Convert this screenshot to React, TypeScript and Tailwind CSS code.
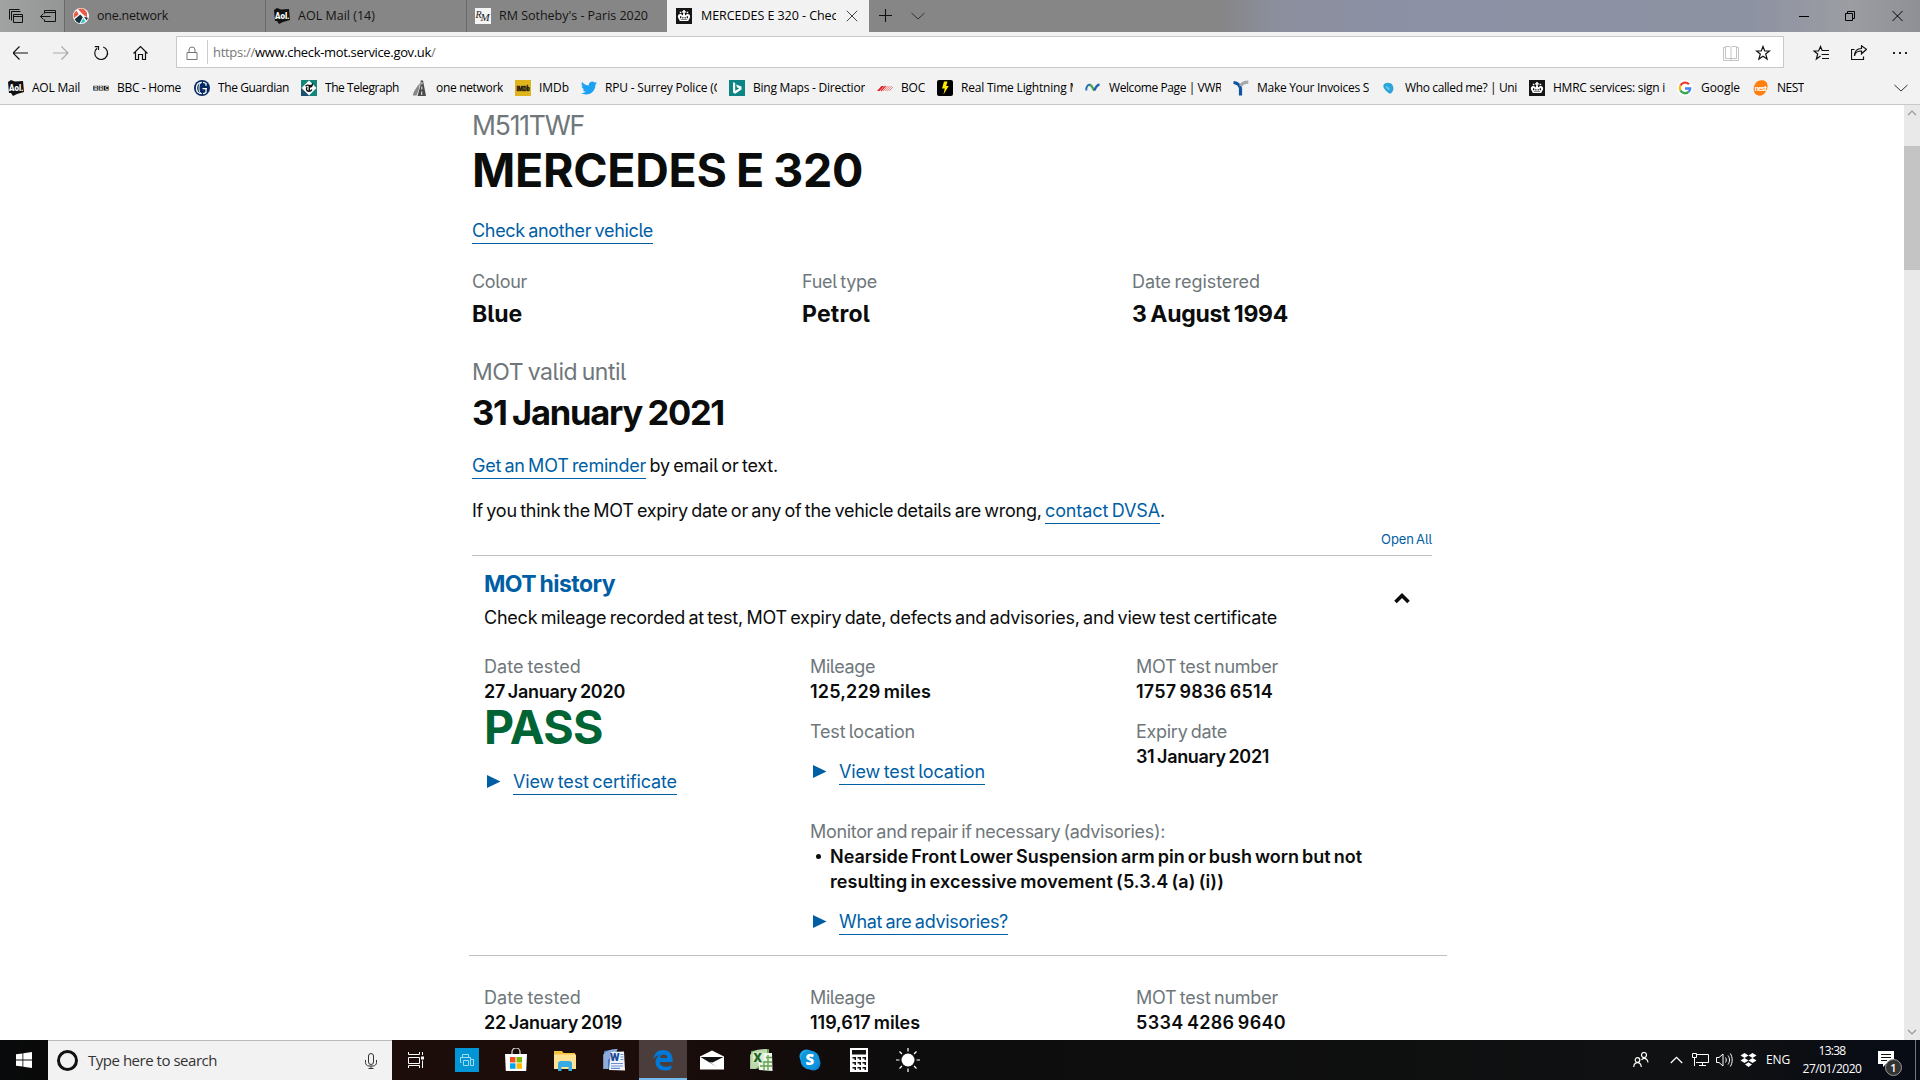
import { useLayoutEffect, useRef, type ReactNode } from "react";

/** Single line of text whose tracking is adjusted so that it fills a given width. */
function Fit({ w, className = "", children }: { w: number; className?: string; children: string }) {
  const ref = useRef<HTMLSpanElement>(null);
  useLayoutEffect(() => {
    const el = ref.current;
    if (!el) return;
    el.style.letterSpacing = "0px";
    const natural = el.getBoundingClientRect().width;
    el.style.letterSpacing = `${(w - natural) / children.length}px`;
  }, [w, children]);
  return (
    <span ref={ref} className={`inline-block shrink-0 justify-self-start whitespace-pre ${className}`}>
      {children}
    </span>
  );
}

function Svg({ w = 16, h = 16, children, className = "" }: { w?: number; h?: number; children: ReactNode; className?: string }) {
  return (
    <svg width={w} height={h} viewBox={`0 0 ${w} ${h}`} fill="none" className={`shrink-0 ${className}`}>
      {children}
    </svg>
  );
}

/* ---------- favicons ---------- */

const Aol = () => (
  <Svg>
    <path d="M0 2 3 0l4 1.500 8-.5 1 11-7 2-4 2-2-3H1z" fill="#111" />
    <text x="1" y="11" fontSize="8.500" fontWeight="900" fill="#fff" fontFamily="Roboto, sans-serif" textLength="14.500" lengthAdjust="spacingAndGlyphs">Aol.</text>
  </Svg>
);

const OneNetwork = () => (
  <Svg>
    <circle cx="8" cy="8" r="8" fill="#fff" />
    <path d="M3.400 2.400A7.300 7.300 0 0 0 1 10L5.800 6.200z" fill="#ee5a48" />
    <path d="M5 1.300a7.400 7.400 0 0 1 6.500.200L14 4.500v5L9.500 6z" fill="#ee5a48" />
    <path d="M7.300 6.500 1.600 11.200A7.300 7.300 0 0 0 6.500 15.200L9.800 9.300z" fill="#17333d" />
    <path d="m10.300 10.200-2.800 5.100a7.300 7.300 0 0 0 5-1.800z" fill="#35c0cc" />
    <path d="m11 8.700 2.700 3.700 1.300-2.600z" fill="#17333d" />
  </Svg>
);

const RM = () => (
  <Svg>
    <rect width="16" height="16" fill="#f4f4f4" />
    <text x="0.500" y="9.500" fontSize="10" fontStyle="italic" fill="#222" fontFamily="Liberation Serif, serif">R</text>
    <text x="5.500" y="13" fontSize="11" fontStyle="italic" fill="#222" fontFamily="Liberation Serif, serif">M</text>
  </Svg>
);

const Crown = () => (
  <Svg>
    <rect width="16" height="16" fill="#151515" />
    <path d="M3.800 13 2 9.500C1.300 7 3.300 5.500 5.300 6.300L7 7.500V6h2v1.500l1.700-1.200c2-.8 4 .7 3.300 3.200L12.200 13z" fill="#fff" />
    <path d="M7.200 2h1.600v1.200H10v1.300H8.800V6H7.200V4.500H6V3.200h1.200zM3.800 3.800h1.600v1.500H3.800zM10.600 3.800h1.600v1.500h-1.600z" fill="#fff" />
    <path d="M4 8.300h1.300v2H4zM6.300 9h1.100v1.500H6.300zM8.600 9h1.100v1.500H8.600zM10.700 8.300H12v2h-1.300zM4.800 11.600h6.400v.5H4.800z" fill="#151515" />
  </Svg>
);

const Bbc = () => (
  <Svg>
    {["B", "B", "C"].map((c, i) => (
      <g key={i}>
        <rect x={0.3 + i * 5.3} y="5.800" width="4.700" height="4.700" fill="#111" />
        <text x={1.3 + i * 5.3} y="9.800" fontSize="4.500" fontWeight="700" fill="#fff" fontFamily="Liberation Sans, sans-serif">{c}</text>
      </g>
    ))}
  </Svg>
);

const Guardian = () => (
  <Svg>
    <circle cx="8" cy="8" r="8" fill="#052962" />
    <path d="M7.600 2.300C4.300 2.500 2.500 5 2.500 8s1.800 5.500 5.100 5.700M9 2.300c1.200.1 2 .5 3 1.200v2.300M9 13.700c1.200-.1 2-.5 3-1.200V8.800M8.500 8.600H13" stroke="#fff" strokeWidth="1.300" />
    <path d="M7.600 2.300c-2 .7-2.600 3-2.600 5.700s.6 5 2.600 5.700" stroke="#fff" strokeWidth="1" />
  </Svg>
);

const Telegraph = () => (
  <Svg>
    <path d="M0 0h16v16H0z" fill="#14857a" />
    <path d="M0 0h8v8H0zM0 8h8v8H0z" fill="#1b4f70" />
    <path d="M0 0h8v4L4 8H0z" fill="#14857a" />
    <path d="M8 .5 15.500 8 8 15.500.5 8z" fill="#fff" />
    <path d="M4.500 6.300c1-2 3-1 4-.8 1 .2 2 .2 2.800-.8-.2 2-1.500 2.500-3 2.200v4M6.200 7c-1.300 1.500-.8 4.200 1.600 4.400 1.500.1 2.500-.7 3-1.900" stroke="#111" strokeWidth="1.400" />
  </Svg>
);

const Road = () => (
  <Svg>
    <path d="M8.700.5h2.300L14 16H5.500L8.300 6z" fill="#4b4b4b" />
    <path d="M8 3C5 7 2 10 .8 15.500h3.700L7 9z" fill="#888" />
    <path d="M9.900 2v2.500M9.800 6.500v3M9.700 11.500V15" stroke="#fff" strokeWidth=".9" />
  </Svg>
);

const Imdb = () => (
  <Svg>
    <rect width="16" height="16" fill="#e0b41c" />
    <text x="1.400" y="10.600" fontSize="7" fontWeight="900" fill="#111" stroke="#111" strokeWidth=".3" fontFamily="Roboto, sans-serif" textLength="13.200" lengthAdjust="spacingAndGlyphs">IMDb</text>
  </Svg>
);

const Twitter = () => (
  <svg width="16" height="16" viewBox="0 0 24 24" className="shrink-0">
    <path fill="#1da1f2" d="M23.950 4.570a10 10 0 0 1-2.820.770 4.960 4.960 0 0 0 2.160-2.720 9.900 9.900 0 0 1-3.120 1.190 4.920 4.920 0 0 0-8.380 4.480A13.930 13.930 0 0 1 1.640 3.160a4.920 4.920 0 0 0 1.520 6.570 4.900 4.900 0 0 1-2.230-.61v.06a4.920 4.920 0 0 0 3.950 4.830 5 5 0 0 1-2.210.08 4.940 4.940 0 0 0 4.600 3.420A9.870 9.870 0 0 1 0 19.540a13.990 13.990 0 0 0 7.550 2.210c9.050 0 14-7.500 14-13.980 0-.21 0-.42-.02-.63a9.940 9.940 0 0 0 2.460-2.550z" />
  </svg>
);

const Bing = () => (
  <Svg>
    <rect width="16" height="16" fill="#0c8484" />
    <path d="m4 2.200 2.200.8v7.700l4-2.200-2-.9-1.200-3 5.500 2v2.900L6.200 13.800 4 12.500z" fill="#fff" />
  </Svg>
);

const Boc = () => (
  <Svg>
    <path d="M0 11 4.500 6H7l-4.500 5z" fill="#e01b1b" />
    <path d="m4 11 4.500-5" stroke="#e33" strokeWidth="1.500" />
    <path d="M6.200 11 10.700 6M8.200 11l4.500-5M10.200 11l4.500-5M12.200 11 16 7" stroke="#ee6a6a" strokeWidth=".8" />
  </Svg>
);

const Lightning = () => (
  <Svg>
    <rect width="16" height="16" rx="2" fill="#000" />
    <path d="M7 1.500h3.500L9.200 6h2.500L6.500 14.500l1.200-6H5z" fill="#ffe600" />
  </Svg>
);

const Vwr = () => (
  <Svg>
    <path d="M6 5C3 4 1 6.500 1.300 10.500" stroke="#2a6fb8" strokeWidth="1.900" />
    <path d="M5 5c2.500.5 2.500 3.500 4.200 5.500" stroke="#45a64a" strokeWidth="2.300" />
    <path d="M14.500 4.500c-2.500.5-4 3-5.200 6" stroke="#2a5fae" strokeWidth="2.300" />
  </Svg>
);

const Invoices = () => (
  <Svg>
    <path d="M.5 2.500c3 .2 5.700 2 7 5.500v7.500" stroke="#1155a0" strokeWidth="3.200" />
    <path d="M7.500 6c1-2 3-3.700 7.800-3.800" stroke="#a5a9ae" strokeWidth="3.200" />
  </Svg>
);

const WhoCalled = () => (
  <Svg>
    <path d="M2.500 5c1-2.200 4.500-3 7-1.800S13 8 12 10.500s-2.500 4-4.500 2.500S1.500 8 2.500 5z" fill="#2aa5dc" />
    <path d="M4.500 6c2 0 4 2 4.500 4-1.500.5-4-1.500-4.500-4z" fill="#70c8ec" />
  </Svg>
);

const Google = () => (
  <svg width="16" height="16" viewBox="0 0 16 16" className="shrink-0">
    <circle cx="8" cy="8" r="8" fill="#fff" />
    <g fill="none" strokeWidth="2.300">
      <path d="M12 4.300A5.200 5.200 0 0 0 3.400 5.600" stroke="#ea4335" />
      <path d="M3.400 5.600a5.200 5.200 0 0 0 0 4.800" stroke="#fbbc05" />
      <path d="M3.400 10.400a5.200 5.200 0 0 0 8.200 1.400" stroke="#34a853" />
      <path d="M11.600 11.800A5.200 5.200 0 0 0 13.200 8.500H8" stroke="#4285f4" />
    </g>
  </svg>
);

const Nest = () => (
  <Svg>
    <path d="M8 .3c4-.8 7 2 6.500 6.500S11 15.800 6.500 15.700-.3 11 1 6.500 5 .8 8 .3z" fill="#ff7f0f" />
    <text x="1.800" y="10.700" fontSize="7.500" fontWeight="700" fill="#fff" fontFamily="Roboto, sans-serif" textLength="12">nest</text>
  </Svg>
);

/* ---------- browser frame ---------- */

function Tab({ icon, label, w }: { icon: ReactNode; label: string; w: number }) {
  return (
    <div className="flex h-8 w-[201px] shrink-0 items-center border-l border-[#6a6a6a] bg-[#868686] pl-2">
      {icon}
      <Fit w={w} className="ml-[8px] text-[12.500px] text-[#151515]">{label}</Fit>
    </div>
  );
}

function TitleBar() {
  return (
    <div className="flex h-8 items-center bg-[linear-gradient(90deg,#a0a3a2_0px,#949595_64px,#868686_300px,#868686_1220px,#8b8f9d_1275px,#8b90a5_1400px,#8d92a2_1750px,#9c9da3_1850px,#8e9096_1920px)]">
      <div className="flex w-[64px] shrink-0 items-center gap-4 pl-2">
        <Svg className="text-black">
          <path d="M1.500 11.500v-10h10M3.500 12.500v-9h9M5.500 6.500h9v8h-9zM5.500 8.500h9" stroke="#111" />
        </Svg>
        <Svg>
          <path d="M4.500 5.500v-3h11v11h-11v-2M4.500 4.500h11M10.500 8.500H.5M3.500 5.500l-3 3 3 3" stroke="#111" />
        </Svg>
      </div>
      <Tab icon={<OneNetwork />} label="one.network" w={71} />
      <Tab icon={<Aol />} label="AOL Mail (14)" w={77} />
      <Tab icon={<RM />} label="RM Sotheby's - Paris 2020" w={149} />
      <div className="flex h-8 w-[202px] shrink-0 items-center bg-[#f2f2f2] pl-[9px]">
        <Crown />
        <div className="ml-[9px] flex w-[135px] overflow-hidden">
          <Fit w={143} className="text-[12.500px] text-black">MERCEDES E 320 - Check</Fit>
        </div>
        <Svg w={12} h={12} className="ml-[10px]">
          <path d="m.8.8 10.400 10.400M11.200.8.8 11.200" stroke="#444" />
        </Svg>
      </div>
      <Svg w={14} h={14} className="ml-[10px]">
        <path d="M6.500 0v13M0 6.500h13" stroke="#111" strokeWidth="1.100" />
      </Svg>
      <Svg w={14} h={14} className="ml-[18px]">
        <path d="m.5 4 6.500 6 6.500-6" stroke="#333" />
      </Svg>
      <div className="mr-[17px] ml-auto flex items-center gap-9">
        <Svg w={10} h={12}><path d="M0 6.500h10" stroke="#000" /></Svg>
        <Svg w={11} h={12}>
          <path d="M.5 3.500h7v7h-7zM2.500 3.500v-2h7v7h-2" stroke="#000" />
        </Svg>
        <Svg w={11} h={12}>
          <path d="m.5 1 10 10M10.500 1l-10 10" stroke="#000" />
        </Svg>
      </div>
    </div>
  );
}

const starPath = "M8 1.500 9.700 6h4.800l-3.800 3 1.400 5L8 11.200 3.900 14l1.400-5-3.800-3h4.800z";

function AddressBar() {
  return (
    <div className="flex h-10 items-center bg-[#f2f2f2] pt-1 pb-1">
      <div className="flex w-[176px] shrink-0 items-center gap-6 pt-px pl-[13px]">
        <Svg><path d="M0 8h15M6.500 1.500 0 8l6.500 6.500" stroke="#111" strokeWidth="1.200" /></Svg>
        <Svg><path d="M0 8h15M8.500 1.500 15 8l-6.500 6.500" stroke="#aaa" strokeWidth="1.200" /></Svg>
        <Svg><path d="M10.200 2A6.400 6.400 0 1 1 4 3.200M1.800 1.600h3.700v3.500" stroke="#111" strokeWidth="1.200" /></Svg>
        <Svg><path d="M.500 8.500 7.500 1.600l7 6.900M2.500 7v7.500h3V9.500h4v5h3V7" stroke="#111" strokeWidth="1.200" /></Svg>
      </div>
      <div className="flex h-8 w-[1608px] shrink-0 items-center border border-[#c8c8c8] bg-white">
        <Svg w={12} h={14} className="mt-px ml-[9px]">
          <path d="M1 6.500h10v7H1zM3 6.500V4a3 3 0 0 1 6 0v2.500" stroke="#777" />
        </Svg>
        <div className="ml-[9px] h-6 w-px bg-[#ccc]" />
        <div className="mt-0.5 ml-[5px] flex text-[13px]">
          <Fit w={42} className="text-[#777]">https://</Fit>
          <Fit w={176} className="text-black">www.check-mot.service.gov.uk</Fit>
          <span className="text-[#777]">/</span>
        </div>
        <Svg className="mt-px ml-auto">
          <path d="M.5 2.500h2v11h11v-11h2v13H.5zM2.500 1.500H7l1 1 1-1h4.500v12H9l-1 1-1-1H2.500zM8 2.500v12" stroke="#c4c4c4" />
        </Svg>
        <Svg className="mt-px mr-[12px] ml-4"><path d={starPath} stroke="#111" strokeWidth="1.200" /></Svg>
      </div>
      <div className="ml-[29px] flex items-center gap-[22px] pt-px">
        <Svg>
          <path d="M11 5.500H9.200L7.500 1.500 5.600 6H1l3.700 3L3.400 14 7.500 11M9 5.500h7M8.500 9.500H16M9 13.500h7" stroke="#111" strokeWidth="1.200" />
        </Svg>
        <Svg>
          <path d="M3.500 4.500h-3v10h12v-3M3.500 11C4 7.500 6.500 6 10.500 6v2.800l5-4.500-5-3.500v2.700C6 3.600 3.600 6.500 3.500 11z" stroke="#111" strokeWidth="1.200" />
        </Svg>
        <Svg className="ml-1">
          <path d="M0 7h2v2H0zM6 7h2v2H6zM12 7h2v2h-2z" fill="#222" />
        </Svg>
      </div>
    </div>
  );
}

const bookmarks: { icon: ReactNode; label: string; w: number; clip?: number; gap: number }[] = [
  { icon: <Aol />, label: "AOL Mail", w: 48, gap: 13 },
  { icon: <Bbc />, label: "BBC - Home", w: 64, gap: 13 },
  { icon: <Guardian />, label: "The Guardian", w: 71, gap: 12 },
  { icon: <Telegraph />, label: "The Telegraph", w: 74, gap: 13 },
  { icon: <Road />, label: "one network", w: 67, gap: 12 },
  { icon: <Imdb />, label: "IMDb", w: 30, gap: 12 },
  { icon: <Twitter />, label: "RPU - Surrey Police (G", w: 117, clip: 112, gap: 12 },
  { icon: <Bing />, label: "Bing Maps - Directions", w: 120, clip: 112, gap: 12 },
  { icon: <Boc />, label: "BOC", w: 24, gap: 12 },
  { icon: <Lightning />, label: "Real Time Lightning M", w: 119, clip: 112, gap: 12 },
  { icon: <Vwr />, label: "Welcome Page | VWR", w: 113, clip: 112, gap: 12 },
  { icon: <Invoices />, label: "Make Your Invoices S", w: 112, clip: 112, gap: 12 },
  { icon: <WhoCalled />, label: "Who called me? | Uni", w: 112, clip: 112, gap: 12 },
  { icon: <Crown />, label: "HMRC services: sign i", w: 112, clip: 112, gap: 12 },
  { icon: <Google />, label: "Google", w: 39, gap: 13 },
  { icon: <Nest />, label: "NEST", w: 27, gap: 0 },
];

function BookmarksBar() {
  return (
    <div className="flex h-[33px] items-center border-b border-[#c8c8c8] bg-[#f2f2f2] pl-2">
      {bookmarks.map((b) => (
        <div key={b.label} className="flex shrink-0 items-center" style={{ marginRight: b.gap }}>
          {b.icon}
          <div className="mb-px ml-2 flex overflow-hidden" style={{ width: b.clip ?? b.w }}>
            <Fit w={b.w} className="text-[12px] text-black">{b.label}</Fit>
          </div>
        </div>
      ))}
      <Svg w={14} h={14} className="mr-[12px] ml-auto">
        <path d="m.5 4 6.500 6 6.500-6" stroke="#333" />
      </Svg>
    </div>
  );
}

/* ---------- page ---------- */

const Label = ({ w, children }: { w: number; children: string }) => (
  <div className="h-[25px]"><Fit w={w} className="text-[#6f777b]">{children}</Fit></div>
);

const Value = ({ w, children }: { w: number; children: string }) => (
  <div className="h-[25px]"><Fit w={w} className="font-semibold">{children}</Fit></div>
);

const Link = ({ w, children }: { w: number; children: string }) => (
  <a className="block h-[26px] shrink-0 border-b border-[#005ea5] text-[#005ea5]" style={{ width: w }}>
    <Fit w={w}>{children}</Fit>
  </a>
);

const Disclosure = ({ w, children }: { w: number; children: string }) => (
  <div className="flex pl-[3px]">
    <Svg w={14} h={14} className="mt-[6px] mr-[12px]"><path d="M0 0v13l13.500-6.500z" fill="#005ea5" /></Svg>
    <Link w={w}>{children}</Link>
  </div>
);

function Page() {
  return (
    <main className="h-full flex-1 overflow-hidden bg-white pt-[5px] pl-[472px] font-['Inter',sans-serif] text-[18px] leading-[25px] [word-spacing:-0.08em] text-[#0b0c0c] [font-feature-settings:'cv05']">
      <div className="w-[960px]">
        <div className="h-[30px] text-[26.500px] leading-[30px]"><Fit w={112} className="text-[#6f777b]">M511TWF</Fit></div>
        <h1 className="mt-[5px] h-[50px] text-[46.500px] leading-[50px] font-bold"><Fit w={391}>MERCEDES E 320</Fit></h1>
        <div className="mt-[23px]"><Link w={181}>Check another vehicle</Link></div>

        <div className="mt-[25px] grid grid-cols-[330px_330px_300px]">
          <Label w={55}>Colour</Label>
          <Label w={75}>Fuel type</Label>
          <Label w={128}>Date registered</Label>
        </div>
        <div className="mt-[5px] mb-[-1px] grid h-[30px] grid-cols-[330px_330px_300px] text-[23px] leading-[30px] font-bold">
          <Fit w={50}>Blue</Fit>
          <Fit w={68}>Petrol</Fit>
          <Fit w={156}>3 August 1994</Fit>
        </div>

        <div className="mt-[29px] h-[30px] text-[23px] leading-[30px]"><Fit w={154} className="text-[#6f777b]">MOT valid until</Fit></div>
        <div className="mt-[6px] mb-[-1px] h-10 text-[34.500px] leading-[40px] font-bold"><Fit w={252}>31 January 2021</Fit></div>

        <p className="mt-[21px] flex h-[26px]">
          <Link w={174}>Get an MOT reminder</Link>
          <Fit w={132}> by email or text.</Fit>
        </p>
        <p className="mt-[19px] flex h-[26px]">
          <Fit w={573}>If you think the MOT expiry date or any of the vehicle details are wrong, </Fit>
          <Link w={115}>contact DVSA</Link>
          <span>.</span>
        </p>

        <div className="mt-[5px] flex h-5 justify-end text-[13px] leading-5 text-[#005ea5]"><Fit w={51}>Open All</Fit></div>
        <hr className="mt-[6px] border-[#bfc1c3]" />

        <section className="pt-[13px] pl-3">
          <div className="flex justify-between">
            <div>
              <h2 className="h-[30px] text-[23px] leading-[30px] font-bold text-[#005ea5]"><Fit w={131}>MOT history</Fit></h2>
              <div className="mt-[6px] h-[25px]">
                <Fit w={793}>Check mileage recorded at test, MOT expiry date, defects and advisories, and view test certificate</Fit>
              </div>
            </div>
            <Svg w={16} h={12} className="mt-[23px] mr-[22px]">
              <path d="m1.500 10 6.500-6.500 6.500 6.500" stroke="#0b0c0c" strokeWidth="3.600" />
            </Svg>
          </div>

          <div className="mt-6 grid grid-cols-[326px_326px_300px]">
            <div>
              <Label w={97}>Date tested</Label>
              <Value w={141}>27 January 2020</Value>
              <div className="-mt-0.5 h-[50px] text-[46.500px] leading-[50px] font-bold text-[#006435]"><Fit w={119}>PASS</Fit></div>
              <div className="mt-[17px]"><Disclosure w={164}>View test certificate</Disclosure></div>
            </div>
            <div>
              <Label w={65}>Mileage</Label>
              <Value w={121}>125,229 miles</Value>
              <div className="mt-[15px]"><Label w={105}>Test location</Label></div>
              <div className="mt-[15px]"><Disclosure w={146}>View test location</Disclosure></div>
              <div className="mt-[34px]"><Label w={355}>Monitor and repair if necessary (advisories):</Label></div>
              <div className="flex">
                <div className="mt-[10px] mr-[9px] ml-[6px] size-[5px] shrink-0 rounded-full bg-[#0b0c0c]" />
                <div>
                  <Value w={532}>Nearside Front Lower Suspension arm pin or bush worn but not</Value>
                  <Value w={394}>resulting in excessive movement (5.3.4 (a) (i))</Value>
                </div>
              </div>
              <div className="mt-[15px]"><Disclosure w={169}>What are advisories?</Disclosure></div>
            </div>
            <div>
              <Label w={142}>MOT test number</Label>
              <Value w={137}>1757 9836 6514</Value>
              <div className="mt-[15px]"><Label w={91}>Expiry date</Label></div>
              <Value w={133}>31 January 2021</Value>
            </div>
          </div>

          <hr className="mt-5 -ml-[15px] w-[978px] border-[#bfc1c3]" />

          <div className="mt-[29px] grid grid-cols-[326px_326px_300px]">
            <Label w={97}>Date tested</Label>
            <Label w={65}>Mileage</Label>
            <Label w={142}>MOT test number</Label>
            <Value w={138}>22 January 2019</Value>
            <Value w={110}>119,617 miles</Value>
            <Value w={150}>5334 4286 9640</Value>
          </div>
        </section>
      </div>
    </main>
  );
}

function Scrollbar() {
  return (
    <div className="flex h-full w-4 shrink-0 flex-col items-center bg-[#e9e9e9]">
      <Svg w={10} h={16}><path d="m1 10 4-4 4 4" stroke="#999" strokeWidth="1.200" /></Svg>
      <div className="mt-[25px] h-[124px] w-4 bg-[#c4c4c4]" />
      <Svg w={10} h={16} className="mt-auto"><path d="m1 6 4 4 4-4" stroke="#999" strokeWidth="1.200" /></Svg>
    </div>
  );
}

/* ---------- taskbar ---------- */

const apps: { name: string; active?: boolean; icon: ReactNode }[] = [
  {
    name: "printer",
    icon: (
      <Svg w={24} h={24}>
        <rect width="24" height="24" fill="#0096d6" />
        <path d="M7.500 9V6.500h6V9M6.500 14.500h-1v-5h10v2M8.500 12.500h5v5h-5zM15.500 11.500h3v6h-3z" stroke="#a5dcf4" />
      </Svg>
    ),
  },
  {
    name: "store",
    icon: (
      <Svg w={24} h={24}>
        <path d="M8 7V4a4 4 0 0 1 8 0v3" stroke="#ddd" strokeWidth="1.200" />
        <path d="M1 6h22l-.8 17H1.800z" fill="#fff" />
        <path d="M6 9h5.500v5.500H6z" fill="#f25022" /><path d="M12.500 9H18v5.500h-5.500z" fill="#7fba00" />
        <path d="M6 15.300h5.500v5.500H6z" fill="#00a4ef" /><path d="M12.500 15.300H18v5.500h-5.500z" fill="#ffb900" />
      </Svg>
    ),
  },
  {
    name: "explorer",
    icon: (
      <Svg w={24} h={24}>
        <path d="M1 3h8l1.500 2H22v15H1z" fill="#f3c13a" /><path d="M1 6.500h22v14.500H1z" fill="#ffe394" />
        <path d="M5 23v-8.500L7 13h10l2 1.500V23h-3.500v-4h-7v4z" fill="#39abe3" />
      </Svg>
    ),
  },
  {
    name: "word",
    icon: (
      <Svg w={24} h={24}>
        <path d="M2 3 15 1v21L2 20.500z" fill="#4977bd" /><path d="M1 7c3-5 9-6 15-6L6 12v9H1z" fill="#a9c4ea" opacity=".7" />
        <path d="m9 4 13-.5 1 19L7 22z" fill="#f1f5fb" />
        <text x="8" y="13" fontSize="11" fontWeight="900" fill="#1d4b9a" fontFamily="Roboto, sans-serif">W</text>
        <path d="M18.500 6.500h3M18.500 9h3M18.500 11.500h3M9 15.500h12M9 18h12M9 20.300h9" stroke="#6a8fce" strokeWidth="1.200" />
      </Svg>
    ),
  },
  {
    name: "edge",
    active: true,
    icon: (
      <svg width="22" height="22" viewBox="0 0 24 24" className="mt-px">
        <path fill="#0078d7" d="M1.500 10.800C2.300 4.600 6.500 1 12.300 1 18.700 1 22.500 5.500 22.500 11.500v2.800H8.500c.1 3.500 2.800 5 6.300 5 2.500 0 4.600-.7 6.300-1.700v4.200c-2 1.100-4.500 1.700-7.200 1.700-6 0-10-3.500-10-9 0-3.700 2-6.700 5.300-8.200C6.100 7 3.300 8.300 1.500 10.800zm7.200-.9h8c0-2.500-1.300-4-3.800-4-2.300 0-3.900 1.500-4.200 4z" />
      </svg>
    ),
  },
  {
    name: "mail",
    icon: (
      <Svg w={24} h={24}>
        <path d="M0 8.500 12 2.500l12 6V21.500H0z" fill="#fff" /><path d="M.500 9h23L12.500 14.500l-3-.5L17 19z" fill="#111" />
      </Svg>
    ),
  },
  {
    name: "excel",
    icon: (
      <Svg w={24} h={24}>
        <path d="M2 3 20 1v20L2 20.500z" fill="#6ea855" /><path d="M1 7c3-5 9-6 17-6v7L7 21H1z" fill="#cfe6c2" opacity=".8" />
        <path d="M9 5h14l.5 18L10 22z" fill="#eef6ea" />
        <path d="M11 14h12M11 18h12M15 13v9M19 7v15M17 9.500h6" stroke="#61a04d" strokeWidth="1.300" />
        <path d="M4 4.500h10.500v10H4z" fill="#d8ebd0" />
        <text x="4.500" y="14" fontSize="13" fontWeight="900" fill="#23651f" fontFamily="Roboto, sans-serif">X</text>
      </Svg>
    ),
  },
  {
    name: "skype",
    icon: (
      <Svg w={24} h={24}>
        <circle cx="8.500" cy="8.500" r="7" fill="#1ba7e5" /><circle cx="15.500" cy="15.500" r="7" fill="#0a84d8" /><circle cx="12" cy="12" r="9.600" fill="#0f95dc" />
        <text x="7.500" y="17.300" fontSize="15" fontWeight="800" fill="#fff" fontFamily="Open Sans, sans-serif">S</text>
      </Svg>
    ),
  },
  {
    name: "calculator",
    icon: (
      <Svg w={18} h={24}>
        <path d="M0 0h18v24H0z" fill="#fff" />
        <path d="M2 2h14v4.500H2z" fill="#111" />
        {[9, 14, 19].map((y) => [2.5, 7.5, 12.5].map((x) => <path key={`${x}-${y}`} d={`M${x} ${y}h3.500v3h-1.500v-1.500h-2z`} fill="#111" />))}
      </Svg>
    ),
  },
  {
    name: "weather",
    icon: (
      <Svg w={24} h={24}>
        <circle cx="12" cy="12" r="6.500" fill="#fff" />
        <path d="M12 0v3.500M12 20.500V24M0 12h3.500M20.500 12H24M3.500 3.500 6 6M18 18l2.500 2.500M3.500 20.500 6 18M18 6l2.500-2.500" stroke="#fff" strokeWidth="1.200" />
      </Svg>
    ),
  },
];

function Taskbar() {
  return (
    <div className="flex h-10 items-center bg-[linear-gradient(90deg,#080a0b_0px,#0a0909_48px,#1c0d0b_400px,#1c0d0a_640px,#140c0b_760px,#0d0d0d_900px,#101112_1700px,#070b15_1920px)] text-white">
      <div className="flex w-12 shrink-0 justify-center">
        <Svg>
          <path d="M0 2.300 6.500 1.400v6.200H0zM7.300 1.300 16 0v7.600H7.300zM0 8.400h6.500v6.200L0 13.700zM7.300 8.400H16V16l-8.700-1.300z" fill="#fff" />
        </Svg>
      </div>
      <div className="flex h-10 w-[344px] shrink-0 items-center border-t border-[#b9b9b9] bg-[#f2f2f2] pl-[9px]">
        <div className="size-[21px] rounded-full border-[3px] border-[#111]" />
        <Fit w={129} className="ml-[10px] text-[15px] text-[#333]">Type here to search</Fit>
        <Svg w={12} h={16} className="mr-[15px] ml-auto">
          <path d="M3.500 3a2.500 2.500 0 0 1 5 0v6a2.500 2.500 0 0 1-5 0zM.5 7v2.500c0 2 1.500 3.500 3.500 3.500h4c2 0 3.500-1.500 3.500-3.500V7M6 13v2.500M3.500 15.500h5" stroke="#333" />
        </Svg>
      </div>
      <div className="flex w-[51px] shrink-0 pl-4">
        <Svg w={17} h={16}>
          <path d="M.5 0v2.500h11V0M.5 5.500h11v6H.5zM.5 16v-2.500h11V16M14.500 0v3M14.500 8.500V16" stroke="#fff" /><path d="M13 4.500h3v3h-3z" fill="#fff" />
        </Svg>
      </div>
      <div className="flex gap-px">
        {apps.map((a) => (
          <div key={a.name} className={`flex h-10 w-12 items-center justify-center ${a.active ? "border-b-2 border-[#76b9ed] bg-[#4a3d3b]" : ""}`}>
            {a.icon}
          </div>
        ))}
      </div>
      <div className="ml-auto flex h-10 items-center">
        <Svg w={16} h={16}>
          <circle cx="11" cy="3" r="2.500" stroke="#fff" strokeWidth="1.200" /><circle cx="4.500" cy="8" r="2.300" stroke="#fff" strokeWidth="1.200" />
          <path d="M.700 15c.3-3 2-4.300 3.800-4.300S8 12 8.300 15M8.500 8c.700-1.200 1.500-1.700 2.500-1.700 2.200 0 3.700 1.600 4 4.200" stroke="#fff" strokeWidth="1.200" />
        </Svg>
        <Svg w={13} h={12} className="ml-[21px]"><path d="m.8 9 5.700-5.700L12.200 9" stroke="#fff" strokeWidth="1.300" /></Svg>
        <Svg w={17} h={16} className="ml-[9px]">
          <path d="M4.500 2.500h12v8H4M10.500 10.500v3M7 13.500h7M.5 1.500h4v4h-4zM2.500 5.500v8.500" stroke="#fff" />
        </Svg>
        <Svg w={17} h={16} className="ml-[7px]">
          <path d="M.5 5.500h2.500l4-3.500v12l-4-3.500H.5zM9.500 5.500c1 1.500 1 3.500 0 5M12 3.500c2 2.700 2 6.300 0 9M14.300 1.500c2.500 4 2.500 9 0 13" stroke="#fff" />
        </Svg>
        <Svg w={17} h={16} className="ml-[7px]">
          <path d="m4.500 1 4 2.500-4 2.500L.5 3.500zM12.500 1l4 2.500-4 2.500-4-2.500zM4.500 6l4 2.500-4 2.500-4-2.500zM12.500 6l4 2.500-4 2.500-4-2.500zM8.500 10.200l3.500 2.300L8.500 15 5 12.500z" fill="#fff" />
        </Svg>
        <Fit w={24} className="ml-[9px] text-[12px]">ENG</Fit>
        <div className="ml-[12px] flex w-[60px] flex-col items-center text-[12px] leading-[18px]">
          <Fit w={27}>13:38</Fit>
          <Fit w={59}>27/01/2020</Fit>
        </div>
        <div className="relative ml-[16px] h-6 w-[26px]">
          <Svg w={17} h={17} className="mt-[3px]">
            <path d="M0 0h16v13H8l-3 3v-3H0z" fill="#fff" /><path d="M3 3.500h10M3 6.500h10M3 9.500h6" stroke="#111" />
          </Svg>
          <div className="absolute top-[11px] left-[7px] flex size-[17px] items-center justify-center rounded-full border border-[#999] bg-[#333] text-[11px] leading-none font-semibold">1</div>
        </div>
        <div className="mr-1 ml-[11px] h-10 w-px bg-[#777]" />
      </div>
    </div>
  );
}

export default function App() {
  return (
    <div className="flex h-[1080px] w-[1920px] flex-col overflow-hidden bg-white font-['Open_Sans','Noto_Sans',sans-serif]">
      <TitleBar />
      <AddressBar />
      <BookmarksBar />
      <div className="flex h-[935px] shrink-0">
        <Page />
        <Scrollbar />
      </div>
      <Taskbar />
    </div>
  );
}
